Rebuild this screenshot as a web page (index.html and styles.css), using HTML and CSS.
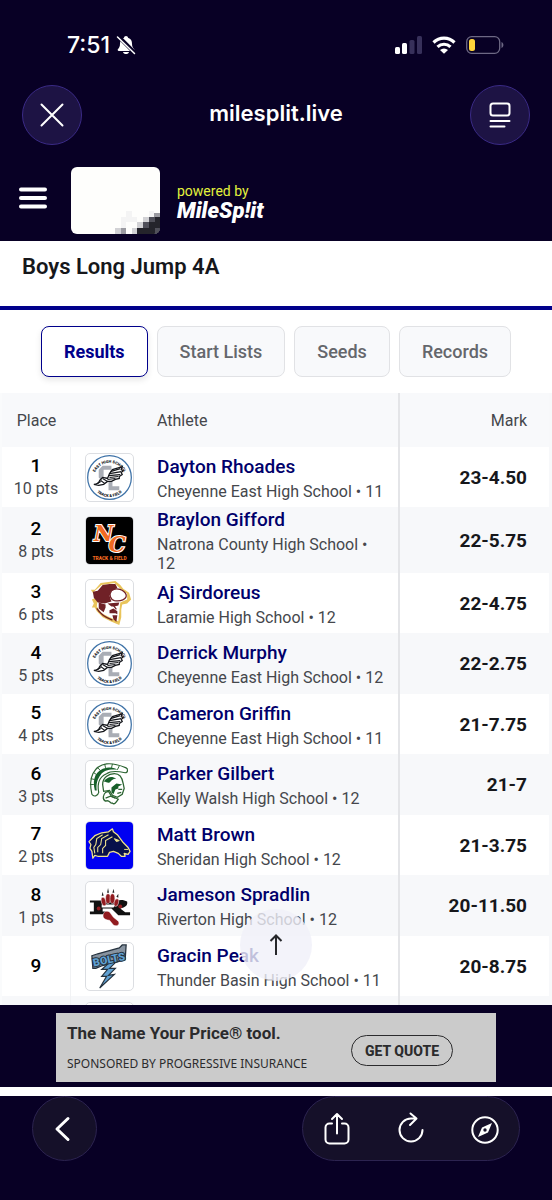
FILE: index.html
```html
<!DOCTYPE html>
<html lang="en">
<head>
    <meta charset="UTF-8">
    <meta name="viewport" content="width=device-width, initial-scale=1">
    <title>Boys Long Jump 4A</title>
    <link rel="stylesheet" href="styles.css">
</head>
<body>
    <!-- school logos -->
    <svg class="sprite" width="0" height="0" aria-hidden="true">
        <symbol id="logo-east" viewBox="0 0 48 48">
            <circle cx="24" cy="24" r="22.300" fill="#fff" stroke="#3f73a8" stroke-width="1.300"/>
            <path d="M26 12h-9l-4 4v8l4 4h5v-4h-4v-8h8zM23 24h4v9h7v4H23z" fill="#a9adb5"/>
            <path d="M8 31c3 0 5-1 6-4l3-3 5 1 2-5 3-4 10-3-1 3 2 1-2 2 1 2-3 2 0 2-4 1-4 2-4 0-4 3-5 1z" fill="#fff" stroke="#15171c" stroke-width="1.300"/>
            <path d="M25 18l10-3M24 20l12-2M23 22l12-1M24 24l9-1M22 26l8-1M15 27l4 3M17 25l5 3M12 30l3-2" stroke="#15171c" stroke-width="1.200" fill="none"/>
            <path id="east-top" d="M8 25a16 16 0 0 1 32 0" fill="none"/>
            <path id="east-bottom" d="M5 25a19 19 0 0 0 38 0" fill="none"/>
            <text class="ring-text"><textPath href="#east-top" startOffset="50%" text-anchor="middle">EAST HIGH SCHOOL</textPath></text>
            <text class="ring-text"><textPath href="#east-bottom" startOffset="50%" text-anchor="middle">TRACK &amp; FIELD</textPath></text>
        </symbol>
        <symbol id="logo-natrona" viewBox="0 0 48 48">
            <rect width="48" height="48" fill="#000"/>
            <text class="nc-letter" x="8" y="24">N</text>
            <text class="nc-letter" x="23" y="36">C</text>
            <text class="nc-sub" x="24" y="44" text-anchor="middle">TRACK &amp; FIELD</text>
        </symbol>
        <symbol id="logo-laramie" viewBox="0 0 48 48">
            <path d="M5 10l4 0 6-7 8-1 7-1 5 4 3 4 6 4 2 7-4 4-5 1-1 5 0 8-2 8-9-4-8-4-6-6-2-4-3 0 2-4-2-4 4-2z" fill="#e9c45b"/>
            <path d="M8 12l8-7 13-2 6 6 7 5 0 6-7 3-1 10-1 9-9-4-8-4-5-7 1-7z" fill="#fff"/>
            <path d="M7 12l5-1 5-6 7-1 6 0 2 4-5 3-3 5 2 6-7 2-7-1-4-5z" fill="#702127"/>
            <path d="M26 11c5-4 13-1 15 4 1 5-6 7-12 6-4-1-6-6-3-10z" fill="#fff" stroke="#702127" stroke-width="1.300"/>
            <path d="M13 23l7 2 0 3-2 5-5-4zM22 24l12-1-1 3-4 1-3 0zM24 31l4-2 4 3 0 3-2-1-6 0zM27 36l5 0-1 7-3-3z" fill="#702127"/>
            <path d="M11 29c3 5 8 9 16 12M28 26l3 4" fill="none" stroke="#702127" stroke-width="1.300"/>
        </symbol>
        <symbol id="logo-walsh" viewBox="0 0 48 48">
            <path d="M6 34C2 17 8 5 21 3c8-1 15 2 20 4 2 1 2 5-1 5-9-2-15-2-19 1-7 3-10 9-8 19-1 4-5 5-7 2z" fill="#fff" stroke="#2c6432" stroke-width="1.200"/>
            <path d="M9 30C6 18 10 9 21 7c6-1 8 0 11 2-8-1-14 1-17 5-3 4-5 9-4 16z" fill="#17602a"/>
            <path d="M17 24c0-7 6-11 12-11 5 0 8 4 9 10l1 5-2 6-5 3-5-2-3-5-6 1z" fill="#fff" stroke="#2c6432" stroke-width="1.300"/>
            <path d="M18 21c4-5 8-6 13-3-4 0-5 2-7 4-2 1-3-1-6-1zM26 27l5-4 6 1-4 2 0 2-3 1-2 5-2-2z" fill="#17602a"/>
            <path d="M20 32c-2 2-4 7 0 9 4-2 5 3 7 2 2 2 4-1 6-4l-7-3-3-5z" fill="#fff" stroke="#2c6432" stroke-width="1.300"/>
            <path d="M20 38l5-2 5 2M33 29h4M32 33l4-1" stroke="#2c6432" stroke-width="1.300" fill="none"/>
            <path d="M8 12l3 2M12 7l3 3M5 18l4 1M4 24l4 0M19 3l1 4M27 3l-1 4M34 5l-2 4" stroke="#2c6432" fill="none"/>
        </symbol>
        <symbol id="logo-sheridan" viewBox="0 0 48 48">
            <rect width="48" height="48" fill="#0000f2"/>
            <path d="M7 37l-1-7-2-3 1-4-2-3 6-6 7-3 7-1 4-3 1 3 4 3 3 4 3 4 5 5 2 4-2 3-4-1 1 3-4 0-3-3-5-2-4 1-2 4-6 0-4 0-3-1z" fill="#08104b" stroke="#efe28b" stroke-width="1.300" stroke-linejoin="round"/>
            <path d="M17 13l-6 4-1 6-2 3 1 6M23 13l-7 4-1 6-3 3 0 5M27 15l-7 4 0 5-3 3 0 5" fill="none" stroke="#efe28b" stroke-width="1.100"/>
            <path d="M29 17l5 2-3 1zM39 28l4 0" fill="#efe28b" stroke="#efe28b"/>
        </symbol>
        <symbol id="logo-riverton" viewBox="0 0 48 48">
            <path d="M4 19h27c4-1 8-1 11 1 1 4-2 6-7 7l5 4h5v3H33l-7-7H17v3h4v3H4v-3h4v-9H4z" fill="#111"/>
            <path d="M16 23h15l-3 3H16z" fill="#fff"/>
            <g fill="#921c20" stroke="#fff" stroke-width=".5">
                <ellipse cx="18" cy="20" rx="2.400" ry="4.500" transform="rotate(-14 18 20)"/>
                <ellipse cx="22.500" cy="17" rx="2.500" ry="5"/>
                <ellipse cx="27" cy="17" rx="2.500" ry="5"/>
                <ellipse cx="31" cy="21" rx="2.300" ry="4" transform="rotate(15 31 21)"/>
                <path d="M18 32c1-3 6-3 7 0l3 4 5 4c2 3-1 6-5 4l-4-5c-5 0-8-3-6-7z"/>
            </g>
            <path d="M16 14l1-4 1 4M21.500 11l1-5 1 5M27 11l1-4 1 4M31 15l2-3 0 4" fill="#222"/>
            <circle cx="13" cy="27" r="2" fill="#921c20"/>
            <circle cx="35" cy="25" r="2" fill="#921c20"/>
        </symbol>
        <symbol id="logo-thunder" viewBox="0 0 48 48">
            <path d="M6 13l6-2 22-6 3-3 4 0-1 15-11 3-12 3-7 3-3 0z" fill="#8793a0" stroke="#26333f" stroke-width="1.300"/>
            <path d="M24 20l-8 7 6 0-6 7 5 0-7 12 15-14-6 1 7-7-6 0 7-7z" fill="#5fa0d2" stroke="#26333f" stroke-width="1.200"/>
            <text class="bolts-text" x="8" y="24" transform="rotate(-12 8 24)">BOLTS</text>
        </symbol>
    </svg>

    <div class="screen">
        <header class="top">
            <div class="status-bar">
                <div class="status-left">
                    <span class="clock">7:51</span>
                    <svg width="20" height="20" viewBox="0 0 20 20" aria-hidden="true">
                        <path d="M10 1c1 0 2 .8 2 1.800 3 .9 4 3.200 4 6 0 3 1 4.200 2 5.200.6.700.3 2-.8 2H2.800c-1.100 0-1.400-1.300-.8-2 1-1 2-2.200 2-5.200 0-2.800 1-5.100 4-6C8 1.800 9 1 10 1zM7 17h6c-.4 1.400-1.500 2-3 2s-2.600-.6-3-2z" fill="#fff"/>
                        <path d="M2 1l17 17" stroke="#080025" stroke-width="4"/>
                        <path d="M1.500 2l17 16.500" stroke="#fff" stroke-width="1.500" stroke-linecap="round"/>
                    </svg>
                </div>
                <div class="status-right">
                    <svg width="27" height="18" viewBox="0 0 27 18" aria-hidden="true">
                        <rect x="0" y="11" width="5" height="7" rx="1.500" fill="#fff"/>
                        <rect x="7" y="7" width="5" height="11" rx="1.500" fill="#fff"/>
                        <rect x="14.500" y="4" width="5" height="14" rx="1.500" fill="#37305a"/>
                        <rect x="22" y="0" width="5" height="18" rx="1.500" fill="#37305a"/>
                    </svg>
                    <svg width="24" height="18" viewBox="0 0 24 18" aria-hidden="true">
                        <path d="M1.500 6.500a15 15 0 0 1 21 0M5.500 10.800a9.500 9.500 0 0 1 13 0" fill="none" stroke="#fff" stroke-width="3.200"/>
                        <path d="M12 17.800L8 14a6 6 0 0 1 8 0z" fill="#fff"/>
                    </svg>
                    <svg width="38" height="18" viewBox="0 0 38 18" aria-hidden="true">
                        <rect x=".7" y=".7" width="33" height="16.600" rx="5" fill="none" stroke="#6d6884" stroke-width="1.300"/>
                        <rect x="3" y="3" width="6" height="12" rx="2.500" fill="#ffd43a"/>
                        <path d="M35.500 6c2.500 1 2.500 5 0 6z" fill="#6d6884"/>
                    </svg>
                </div>
            </div>

            <div class="url-bar">
                <button class="round-button" type="button" aria-label="Close">
                    <svg width="24" height="24" viewBox="0 0 24 24"><path d="M1.500 1.500l21 21M22.500 1.500l-21 21"/></svg>
                </button>
                <span class="url">milesplit.live</span>
                <button class="round-button" type="button" aria-label="Page menu">
                    <svg width="22" height="26" viewBox="0 0 22 26"><rect x="1.500" y="1.500" width="19" height="12" rx="2.500"/><path d="M1.500 19h19M1.500 24.500h14"/></svg>
                </button>
            </div>

            <div class="site-header">
                <button class="menu-button" type="button" aria-label="Menu">
                    <svg width="30" height="22" viewBox="0 0 30 22"><path d="M3 2.500h24M3 11h24M3 19.500h24"/></svg>
                </button>
                <svg class="meet-logo" width="89" height="67" viewBox="0 0 89 67" shape-rendering="crispEdges" aria-hidden="true">
                    <rect width="89" height="67" fill="#fefefc"/>
                    <path d="M78 50h11v17H66v-6h6v-6h6z" fill="#24242b"/>
                    <path d="M78 50h6v5h-6zM72 55h6v6h-6zM84 61h5v6h-5z" fill="#50505a"/>
                    <path d="M50 61h5v6h-5zM83 46h6v4h-6z" fill="#9b9ba1"/>
                    <path d="M44 61h6v6h-6zM61 61h5v6h-5zM66 55h6v6h-6zM72 50h6v5h-6z" fill="#d2d2d5"/>
                    <path d="M50 50h11v5H50zM55 44h6v6h-6zM61 50h5v5h-5zM78 44h5v6h-5zM50 55h5v6h-5z" fill="#f4f4f4"/>
                </svg>
                <div class="brand">
                    <span class="powered">powered by</span>
                    <span class="milesplit">MileSp!it</span>
                </div>
            </div>
        </header>

        <main class="results">
            <h1 class="event-title">Boys Long Jump 4A</h1>

            <nav class="tabs">
                <button class="tab active" type="button">Results</button>
                <button class="tab" type="button">Start Lists</button>
                <button class="tab" type="button">Seeds</button>
                <button class="tab" type="button">Records</button>
            </nav>

            <table class="result-table">
                <thead>
                    <tr>
                        <th class="place">Place</th>
                        <th class="logo"></th>
                        <th class="athlete">Athlete</th>
                        <th class="mark">Mark</th>
                    </tr>
                </thead>
                <tbody>
                    <tr>
                        <td class="place"><b>1</b><span>10 pts</span></td>
                        <td class="logo"><svg class="school-logo"><use href="#logo-east"/></svg></td>
                        <td class="athlete"><a href="#">Dayton Rhoades</a><span>Cheyenne East High School • 11</span></td>
                        <td class="mark">23-4.50</td>
                    </tr>
                    <tr>
                        <td class="place"><b>2</b><span>8 pts</span></td>
                        <td class="logo"><svg class="school-logo"><use href="#logo-natrona"/></svg></td>
                        <td class="athlete"><a href="#">Braylon Gifford</a><span>Natrona County High School • 12</span></td>
                        <td class="mark">22-5.75</td>
                    </tr>
                    <tr>
                        <td class="place"><b>3</b><span>6 pts</span></td>
                        <td class="logo"><svg class="school-logo"><use href="#logo-laramie"/></svg></td>
                        <td class="athlete"><a href="#">Aj Sirdoreus</a><span>Laramie High School • 12</span></td>
                        <td class="mark">22-4.75</td>
                    </tr>
                    <tr>
                        <td class="place"><b>4</b><span>5 pts</span></td>
                        <td class="logo"><svg class="school-logo"><use href="#logo-east"/></svg></td>
                        <td class="athlete"><a href="#">Derrick Murphy</a><span>Cheyenne East High School • 12</span></td>
                        <td class="mark">22-2.75</td>
                    </tr>
                    <tr>
                        <td class="place"><b>5</b><span>4 pts</span></td>
                        <td class="logo"><svg class="school-logo"><use href="#logo-east"/></svg></td>
                        <td class="athlete"><a href="#">Cameron Griffin</a><span>Cheyenne East High School • 11</span></td>
                        <td class="mark">21-7.75</td>
                    </tr>
                    <tr>
                        <td class="place"><b>6</b><span>3 pts</span></td>
                        <td class="logo"><svg class="school-logo"><use href="#logo-walsh"/></svg></td>
                        <td class="athlete"><a href="#">Parker Gilbert</a><span>Kelly Walsh High School • 12</span></td>
                        <td class="mark">21-7</td>
                    </tr>
                    <tr>
                        <td class="place"><b>7</b><span>2 pts</span></td>
                        <td class="logo"><svg class="school-logo"><use href="#logo-sheridan"/></svg></td>
                        <td class="athlete"><a href="#">Matt Brown</a><span>Sheridan High School • 12</span></td>
                        <td class="mark">21-3.75</td>
                    </tr>
                    <tr>
                        <td class="place"><b>8</b><span>1 pts</span></td>
                        <td class="logo"><svg class="school-logo"><use href="#logo-riverton"/></svg></td>
                        <td class="athlete"><a href="#">Jameson Spradlin</a><span>Riverton High School • 12</span></td>
                        <td class="mark">20-11.50</td>
                    </tr>
                    <tr>
                        <td class="place"><b>9</b></td>
                        <td class="logo"><svg class="school-logo"><use href="#logo-thunder"/></svg></td>
                        <td class="athlete"><a href="#">Gracin Peak</a><span>Thunder Basin High School • 11</span></td>
                        <td class="mark">20-8.75</td>
                    </tr>
                    <tr>
                        <td class="place"></td>
                        <td class="logo"><svg class="school-logo"></svg></td>
                        <td class="athlete"></td>
                        <td class="mark"></td>
                    </tr>
                </tbody>
            </table>
        </main>

        <footer class="bottom">
            <button class="to-top" type="button" aria-label="Back to top">
                <svg width="14" height="22" viewBox="0 0 14 22"><path d="M7 21V1.500M1.500 7L7 1.500 12.500 7"/></svg>
            </button>
            <div class="ad-strip">
                <div class="ad">
                    <div class="ad-text">
                        <strong>The Name Your Price® tool.</strong>
                        <small>SPONSORED BY PROGRESSIVE INSURANCE</small>
                    </div>
                    <button class="quote-button" type="button">GET QUOTE</button>
                </div>
            </div>
            <div class="browser-bar">
                <button class="back-button" type="button" aria-label="Back">
                    <svg width="24" height="26" viewBox="0 0 24 26"><path d="M15 2.500L4 13l11 10.500"/></svg>
                </button>
                <div class="tool-group">
                    <button type="button" aria-label="Share">
                        <svg width="28" height="34" viewBox="0 0 28 34"><path d="M9 11.500H6.500a4 4 0 0 0-4 4v12a4 4 0 0 0 4 4h15a4 4 0 0 0 4-4v-12a4 4 0 0 0-4-4H19M14 21.500V2.500M9 7l5-5 5 5"/></svg>
                    </button>
                    <button type="button" aria-label="Reload">
                        <svg width="28" height="34" viewBox="0 0 28 34"><path d="M25.500 18a11.500 11.500 0 1 1-11.500-11.500h5M13.500 1.500l6 5-6.500 6.500"/></svg>
                    </button>
                    <button type="button" aria-label="Open in browser">
                        <svg width="28" height="34" viewBox="0 0 28 34"><circle cx="14" cy="18" r="12.700"/><path class="needle" fill-rule="evenodd" d="M21 11l-4 9.500L7 25l4-9.500zM14 16.300a1.700 1.700 0 1 0 0 3.400 1.700 1.700 0 0 0 0-3.400z"/></svg>
                    </button>
                </div>
            </div>
        </footer>
    </div>
</body>
</html>
```

FILE: styles.css
```css
* {
    box-sizing: border-box;
}

body {
    margin: 0;
    font-family: Roboto, "Liberation Sans", sans-serif;
    background-color: #080025;
    color: #16171b;
}

button {
    padding: 0;
    border: none;
    background: none;
    font-family: inherit;
    cursor: pointer;
}

svg {
    display: block;
}

.sprite {
    position: absolute;
}

.screen {
    display: flex;
    flex-direction: column;
    height: 100vh;
}

/* top bars */
.top {
    flex: none;
    background-color: #080025;
    color: #fff;
}

.status-bar {
    display: flex;
    justify-content: space-between;
    align-items: center;
    height: 85px;
    padding: 4px 48px 0 67px;
    font-family: Inter, sans-serif;
}

.status-left {
    display: flex;
    align-items: center;
    gap: 6px;
}

.clock {
    font-size: 23px;
    font-weight: 500;
}

.status-right {
    display: flex;
    align-items: center;
    gap: 10px;
}

.url-bar {
    display: flex;
    justify-content: space-between;
    align-items: center;
    padding: 0 22px;
}

.url {
    padding-bottom: 4px;
    font-family: Inter, sans-serif;
    font-size: 22px;
    font-weight: 600;
}

.round-button {
    display: flex;
    justify-content: center;
    align-items: center;
    width: 60px;
    height: 60px;
    border: 1px solid #3a2a86;
    border-radius: 50%;
    background-color: #1d1344;
}

.round-button svg,
.menu-button svg,
.back-button svg,
.tool-group svg {
    fill: none;
    stroke: #fff;
    stroke-width: 2;
    stroke-linecap: round;
    stroke-linejoin: round;
}

.site-header {
    display: flex;
    align-items: center;
    padding: 22px 18px 7px;
}

.menu-button {
    margin: 0 23px 6px 0;
}

.menu-button svg {
    stroke-width: 4;
}

.meet-logo {
    border-radius: 6px;
}

.brand {
    display: flex;
    flex-direction: column;
    margin: 3px 0 0 17px;
}

.powered {
    font-size: 14px;
    line-height: 18px;
    color: #e4f23c;
}

.milesplit {
    font-size: 22px;
    line-height: 22px;
    font-style: italic;
    font-weight: 900;
}

/* results */
.results {
    flex: 1;
    min-height: 0;
    overflow: hidden;
    background-color: #fff;
}

.event-title {
    margin: 0;
    padding: 12px 22px 25px;
    border-bottom: 4px solid #00008b;
    font-size: 22px;
    line-height: 28px;
    font-weight: 600;
}

.tabs {
    display: flex;
    justify-content: center;
    gap: 9px;
    padding: 16px 20px;
}

.tab {
    height: 51px;
    padding: 0 22px;
    border: 1px solid #e1e2e5;
    border-radius: 8px;
    background-color: #f8f9fb;
    font-size: 18px;
    font-weight: 500;
    color: #65676c;
}

.tab.active {
    border-color: #00008b;
    background-color: #fff;
    box-shadow: 0 3px 6px rgba(0, 0, 0, 0.1);
    font-weight: 700;
    color: #00008b;
}

.result-table {
    width: 100%;
    border-left: 2px solid #fafbfc;
    border-right: 3px solid #f7f8fa;
    border-collapse: separate;
    border-spacing: 0;
    table-layout: fixed;
}

.result-table th,
.result-table td {
    padding: 0;
}

.result-table th {
    height: 54px;
    background-color: #f8f9fb;
    font-size: 16px;
    font-weight: 400;
    color: #45474c;
}

.result-table td {
    height: 60px;
}

.result-table tr:nth-child(even) td {
    height: 61px;
    background-color: #f7f8fa;
}

.result-table .place {
    width: 69px;
    text-align: center;
}

.result-table td.place {
    border-right: 1px solid #f1f2f4;
}

.place b {
    display: block;
    font-size: 19px;
    line-height: 24px;
    font-weight: 500;
    color: #000;
}

.place span {
    display: block;
    font-size: 16px;
    line-height: 22px;
    color: #45474c;
}

.result-table .logo {
    width: 86px;
    padding-left: 14px;
}

.school-logo {
    width: 49px;
    height: 49px;
    border: 1px solid #dcdee2;
    border-radius: 5px;
    background-color: #fff;
}

.result-table .athlete {
    padding-right: 10px;
    text-align: left;
}

.athlete a {
    display: block;
    margin-bottom: 2px;
    font-size: 19px;
    line-height: 26px;
    font-weight: 500;
    color: #00006b;
    text-decoration: none;
}

.athlete span {
    display: block;
    font-size: 16px;
    line-height: 19px;
    color: #45474c;
}

.result-table .mark {
    width: 151px;
    padding-right: 22px;
    border-left: 2px solid #e4e5e8;
    text-align: right;
}

.result-table td.mark {
    font-size: 19px;
    font-weight: 700;
}

/* logo lettering */
.ring-text {
    font-size: 4px;
    font-weight: 900;
    fill: #15171c;
}

.nc-letter {
    font-family: "DejaVu Serif", serif;
    font-size: 22px;
    font-weight: 700;
    font-style: italic;
    fill: #f26a21;
    stroke: #fff;
    stroke-width: 2px;
    paint-order: stroke;
}

.nc-sub {
    font-size: 5px;
    font-weight: 900;
    fill: #f26a21;
}

.bolts-text {
    font-size: 11px;
    font-weight: 900;
    fill: #5fa0d2;
    stroke: #26333f;
    stroke-width: 2px;
    paint-order: stroke;
}

/* bottom bars */
.bottom {
    position: relative;
    flex: none;
    height: 195px;
    background-color: #080025;
}

.to-top {
    position: absolute;
    top: -96px;
    left: 50%;
    display: flex;
    justify-content: center;
    align-items: center;
    width: 72px;
    height: 72px;
    border-radius: 50%;
    background-color: rgba(240, 240, 249, 0.8);
    transform: translateX(-50%);
}

.to-top svg {
    fill: none;
    stroke: #26272b;
    stroke-width: 2;
}

.ad-strip {
    padding: 8px 0 5px;
    border-bottom: 9px solid #fff;
}

.ad {
    display: flex;
    justify-content: space-between;
    align-items: center;
    max-width: 440px;
    height: 69px;
    margin: 0 auto;
    padding: 0 43px 0 11px;
    background-color: #cbcbcb;
    color: #2b2b2d;
}

.ad-text {
    display: flex;
    flex-direction: column;
    gap: 12px;
}

.ad-text strong {
    font-size: 17px;
    line-height: 20px;
    font-weight: 700;
}

.ad-text small {
    font-family: "Noto Sans", sans-serif;
    font-size: 12px;
    line-height: 18px;
}

.quote-button {
    width: 102px;
    height: 31px;
    margin-top: 6px;
    border: 1px solid #2b2b2d;
    border-radius: 16px;
    font-size: 14px;
    font-weight: 800;
    color: #2b2b2d;
}

.browser-bar {
    display: flex;
    justify-content: space-between;
    padding: 0 32px;
}

.back-button,
.tool-group {
    display: flex;
    justify-content: center;
    align-items: center;
    height: 65px;
    border: 1px solid #2c2350;
    border-radius: 33px;
    background-color: #151029;
}

.back-button {
    width: 65px;
}

.back-button svg {
    stroke-width: 3;
}

.tool-group {
    gap: 46px;
    padding: 0 20px;
}

.tool-group .needle {
    fill: #fff;
    stroke: none;
}
```
